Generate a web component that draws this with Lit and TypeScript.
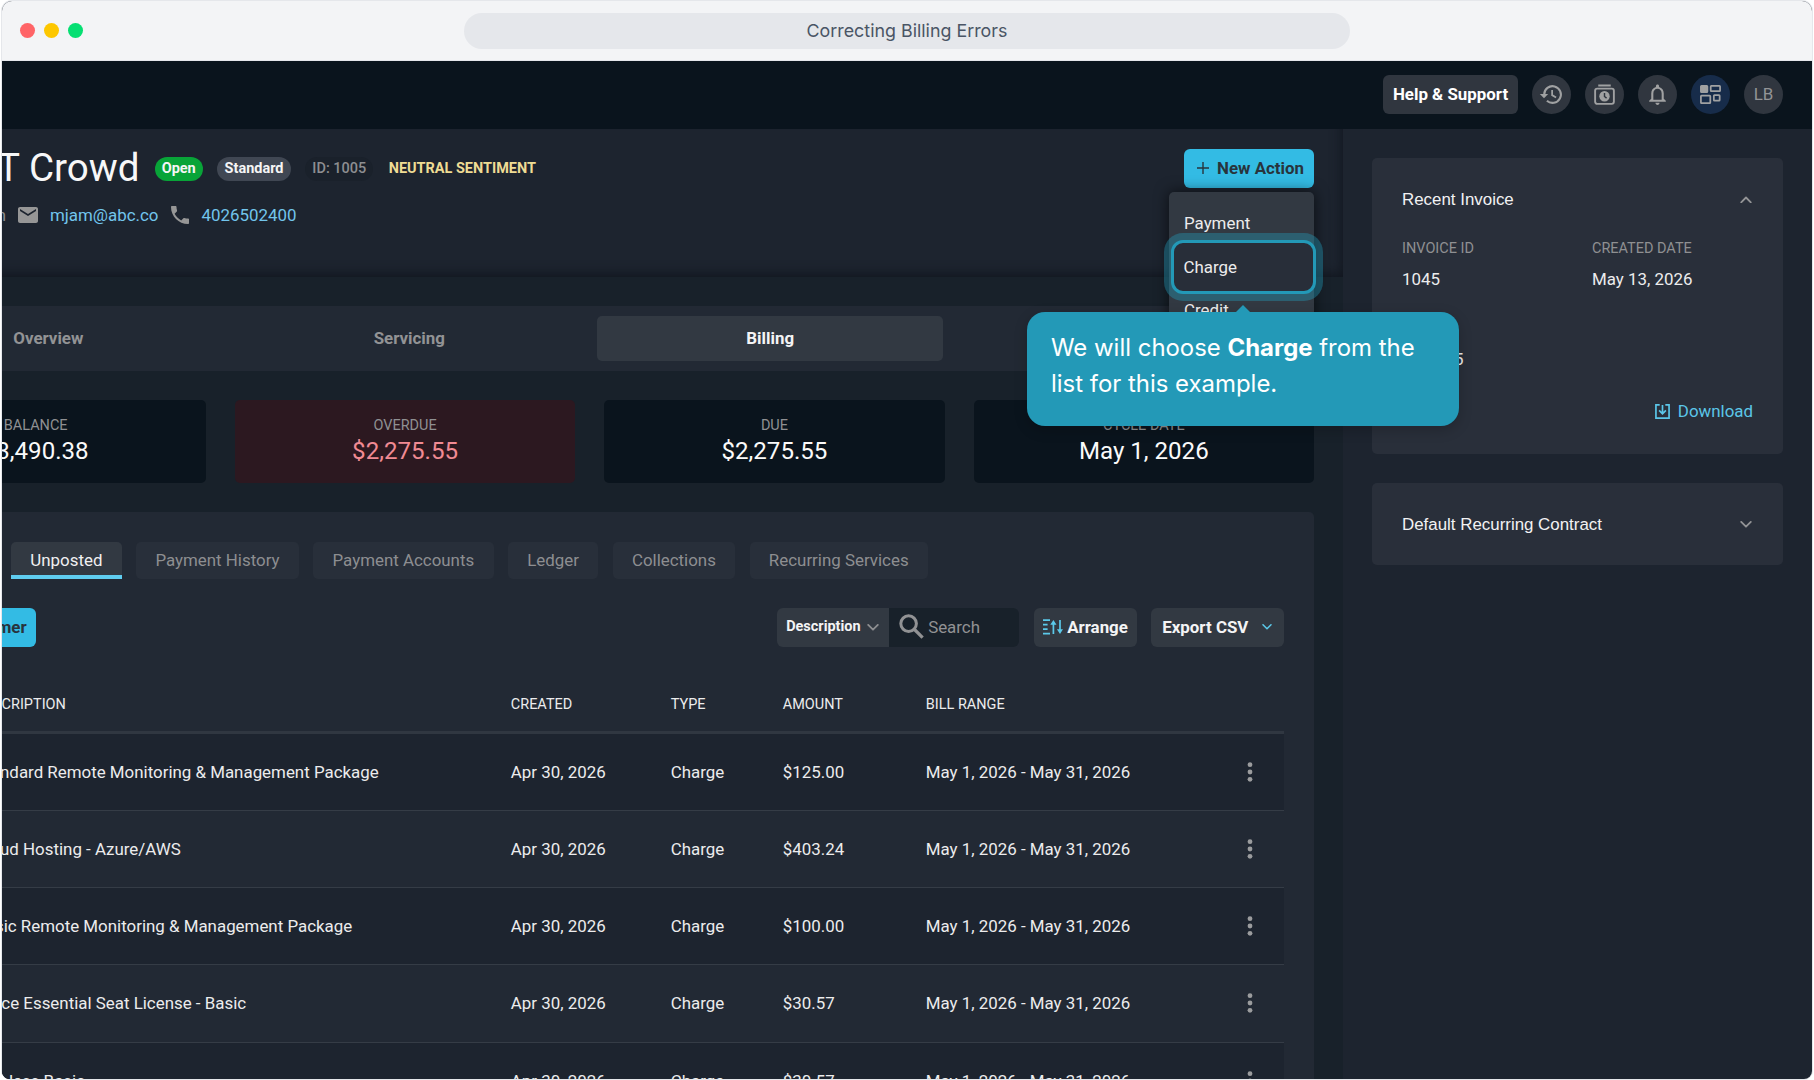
import { LitElement, html, css, svg } from "lit";
import { customElement } from "lit/decorators.js";
import { classMap } from "lit/directives/class-map.js";

const chevron = (dir: "up" | "down", w: number) => html`
  <svg class="chev" width=${w} height=${w * 0.6} viewBox="0 0 20 12" fill="none" stroke="currentColor" stroke-width="3" stroke-linecap="round" stroke-linejoin="round">
    ${dir === "up" ? svg`<path d="M2 10.5 10 2.5l8 8"/>` : svg`<path d="M2 1.5 10 9.5l8-8"/>`}
  </svg>`;

const icons = {
  history: html`<svg width="25" height="25" viewBox="0 0 24 24" fill="none" stroke="currentColor" stroke-width="2">
    <path d="M5 12a8 8 0 1 1 2.6 5.9"/><path d="M.8 11.4h8L4.8 15.7z" fill="currentColor" stroke="none"/>
    <path d="M12.6 7.6v5l3.8 2.2" stroke-width="1.7"/></svg>`,
  clockBox: html`<svg width="25" height="25" viewBox="0 0 24 24" fill="none" stroke="currentColor" stroke-width="1.8">
    <path d="M6 3.3h12" stroke-width="2"/><rect x="3" y="6.4" width="18" height="14.6" rx="2"/>
    <circle cx="12" cy="13.7" r="5" fill="currentColor" stroke="none"/><path d="M12 10.6v3.3l2 1.6" stroke="#30363f" stroke-width="1.4"/></svg>`,
  bell: html`<svg width="25" height="25" viewBox="0 0 24 24" fill="currentColor">
    <path d="M12 22c1.1 0 2-.9 2-2h-4c0 1.1.9 2 2 2zm6-6v-5c0-3.07-1.63-5.64-4.5-6.32V4c0-.83-.67-1.5-1.5-1.5s-1.5.67-1.5 1.5v.68C7.64 5.36 6 7.92 6 11v5l-2 2v1h16v-1l-2-2zm-2 1H8v-6c0-2.48 1.51-4.5 4-4.5s4 2.02 4 4.5v6z"/></svg>`,
  grid: html`<svg width="25" height="25" viewBox="0 0 24 24" fill="none" stroke="currentColor" stroke-width="1.7">
    <rect x="2.8" y="3.8" width="6.2" height="6" rx=".6" fill="currentColor"/><rect x="12.2" y="3.8" width="9" height="5" rx=".6"/>
    <rect x="2.8" y="13" width="9" height="7.2" rx=".6"/><rect x="15.2" y="12.6" width="5.6" height="5.2" rx=".6"/></svg>`,
  mail: html`<svg width="24" height="24" viewBox="0 0 24 24" fill="currentColor"><path d="M20 4H4c-1.1 0-1.99.9-1.99 2L2 18c0 1.1.9 2 2 2h16c1.1 0 2-.9 2-2V6c0-1.1-.9-2-2-2zm0 4-8 5-8-5V6l8 5 8-5v2z"/></svg>`,
  phone: html`<svg width="24" height="24" viewBox="0 0 24 24" fill="currentColor"><path d="M6.62 10.79c1.44 2.83 3.76 5.14 6.59 6.59l2.2-2.2c.27-.27.67-.36 1.02-.24 1.12.37 2.33.57 3.57.57.55 0 1 .45 1 1V20c0 .55-.45 1-1 1-9.39 0-17-7.61-17-17 0-.55.45-1 1-1h3.5c.55 0 1 .45 1 1 0 1.25.2 2.45.57 3.57.11.35.03.74-.25 1.02l-2.2 2.2z"/></svg>`,
  plus: html`<svg width="12" height="12" viewBox="0 0 12 12" stroke="currentColor" stroke-width="1.4"><path d="M6 0v12M0 6h12"/></svg>`,
  search: html`<svg width="25" height="25" viewBox="0 0 25 25" fill="none" stroke="currentColor" stroke-width="3"><circle cx="9.6" cy="9.6" r="7.8"/><path d="m15 15 8.6 8.6" stroke-width="3.2"/></svg>`,
  arrange: html`<svg width="20" height="16" viewBox="0 0 20 16" fill="none" stroke="currentColor" stroke-width="1.7">
    <path d="M0 1.2h7M0 5.6h4.6M0 10.2h4.6M0 14.6h7M10.4 15V3M17 1v12"/><path d="M7.3 5.8 10.4 1l3.1 4.8zM13.9 10.2 17 15l3-4.8z" fill="currentColor" stroke="none"/></svg>`,
  download: html`<svg width="15" height="15" viewBox="0 0 16 16" fill="none" stroke="currentColor" stroke-width="1.8"><path d="M5 1H1v14h14V1H11M8 1v9M4.4 6.8 8 10.4 11.6 6.8"/></svg>`,
  dots: html`<svg width="6" height="20" viewBox="0 0 6 20" fill="currentColor"><circle cx="3" cy="2.7" r="2.4"/><circle cx="3" cy="10" r="2.4"/><circle cx="3" cy="17.3" r="2.4"/></svg>`,
};

const PERIOD = "May 1, 2026 - May 31, 2026";
const ROWS = [
  ["Standard Remote Monitoring & Management Package", "$125.00"],
  ["Cloud Hosting - Azure/AWS", "$403.24"],
  ["Basic Remote Monitoring & Management Package", "$100.00"],
  ["Office Essential Seat License - Basic", "$30.57"],
  ["Wireless Basic", "$30.57"],
];
const STATS = [
  ["BALANCE", "$3,490.38"],
  ["OVERDUE", "$2,275.55"],
  ["DUE", "$2,275.55"],
  ["CYCLE DATE", "May 1, 2026"],
];
const SECTIONS = ["Overview", "Servicing", "Billing", "Activity"];
const LISTS = ["Unposted", "Payment History", "Payment Accounts", "Ledger", "Collections", "Recurring Services"];

@customElement("app-root")
export class AppRoot extends LitElement {
  static styles = css`
    :host { display: block; position: relative; width: 1814px; height: 1080px; overflow: hidden; background: #fff;
      font: 16.9px/20px Roboto, "Liberation Sans", sans-serif; color: #ececed; white-space: nowrap; }
    * { box-sizing: border-box; }
    svg { display: block; flex: none; }
    .window { margin: 1px 2px; height: 1078px; border-radius: 10px 10px 8px 8px; overflow: hidden; display: flex; flex-direction: column;
      background: #1d242f; box-shadow: 0 0 0 1px #e5e7eb; }
    .chrome { height: 60px; flex: none; background: #f3f4f6; border-bottom: 1px solid #e5e7eb; display: grid;
      grid-template-columns: 1fr 886px 1fr; align-items: center; padding: 0 18px; }
    .lights { display: flex; gap: 9px; }
    .light { width: 15px; height: 15px; border-radius: 50%; }
    .red { background: #ff6467; } .amber { background: #fdc700; } .green { background: #05df72; }
    .address { height: 36px; margin-top: 1px; padding-bottom: 1.5px; border-radius: 18px; background: #e5e7eb; color: #4a5565; display: flex; align-items: center;
      justify-content: center; font: 17.85px Inter, sans-serif; }
    .topbar { height: 67.5px; flex: none; background: #0a141d; display: flex; align-items: center; justify-content: flex-end; gap: 14px; padding-right: 29px; }
    .help { height: 39px; width: 135px; padding-bottom: 1px; border-radius: 6px; background: #30363f; color: #fff; font-weight: 700; display: flex; align-items: center; justify-content: center; }
    .round { width: 39px; height: 39px; border-radius: 50%; background: #30363f; color: #a0a1a2; display: flex; align-items: center; justify-content: center; }
    .user { color: #939496; padding-bottom: 1px; }
    .blue { background: #172c4a; }
    .body { flex: 1; min-height: 0; display: flex; }
    .main { width: 1341px; flex: none; overflow: hidden; background: #18212a; }
    .side { flex: 1; padding: 29px; display: flex; flex-direction: column; gap: 29px; }

    .head { height: 148px; background: #1d242f; box-shadow: inset -6px -8px 12px -5px #11161f; display: flex; justify-content: space-between; padding: 20px 29px 0 0; }
    .title-row { display: flex; align-items: center; gap: 14.5px; height: 39px; }
    .title { width: 137.5px; display: flex; justify-content: flex-end; font-size: 38.6px; line-height: 40px; color: #f7f7f8; }
    .tag { height: 24.5px; margin-top: 1.5px; border-radius: 12.3px; padding: 0 7.2px; font-size: 14.47px; font-weight: 700; display: flex; align-items: center; color: #f5f5f5; }
    .open { background: #08a438; margin-left: .5px; } .standard { background: #404753; } .ident { background: #1a212b; color: #8d8e91; font-weight: 500; }
    .mood { margin: 2px 0 0 .8px; font-size: 14.47px; font-weight: 700; color: #efdc94; }
    .contact { display: flex; align-items: center; height: 26px; margin-top: 14.5px; color: #72c5ec; }
    .contact svg { color: #969696; }
    .person { width: 4px; display: flex; justify-content: flex-end; color: #8d8e91; margin-right: 10px; }
    .mail { margin: 0 9.5px 0 10px; } .phone { margin-left: 9.5px; }
    .new { width: 130.5px; height: 39px; padding: 0 0 0 3px; border-radius: 6px; background: #33bbe4; color: #28343c; font-weight: 700; display: flex; align-items: center; justify-content: center; gap: 8.5px; }

    .content { margin-left: -136.5px; padding: 29.5px 29px 0 0; display: flex; flex-direction: column; gap: 29px; }
    .sections { height: 65px; background: #222934; padding: 9.6px; display: grid; grid-template-columns: repeat(4, 1fr); gap: 14.4px; border-radius: 5px; }
    .section { display: flex; align-items: center; justify-content: center; padding-bottom: 2px; font-weight: 700; color: #929395; border-radius: 5px; }
    .section.on { background: #323942; color: #f4f4f5; }
    .stats { display: grid; grid-template-columns: repeat(4, 1fr); gap: 29px; }
    .stat { height: 82.5px; background: #0a141d; border-radius: 5px; display: flex; flex-direction: column; align-items: center; padding-top: 16px; }
    .stat.late { background: #2c1820; } .stat.late .sum { color: #f18a93; }
    .label { font-size: 14.47px; line-height: 20px; color: #8f9092; }
    .sum { font-size: 24.1px; line-height: 30px; color: #fafafa; }
    .panel { background: #222934; border-radius: 5px; padding: 30px 29.8px 0; height: 700px; }
    .lists { display: flex; gap: 14.4px; padding-left: 115.7px; }
    .list { height: 37.4px; padding: 0 19.3px; border-radius: 5px; background: #282f3a; color: #8d8e91; display: flex; align-items: center; }
    .list.on { background: #323942; color: #f0f0f1; border-bottom: 4px solid #5fcdf0; border-radius: 5px 5px 0 0; padding-top: 4px; }
    .tools { display: flex; margin-top: 28.9px; height: 39px; }
    .bill { width: 141px; margin-right: auto; border-radius: 6px; background: #33bbe4; color: #28343c; font-weight: 700; display: flex; align-items: center; justify-content: flex-end; padding: 0 9.7px 1px 0; }
    .field { width: 112px; background: #323942; border-radius: 6px 0 0 6px; font-size: 14.47px; font-weight: 700; color: #f4f4f5; display: flex; align-items: center; justify-content: center; gap: 6px; padding-right: 1.5px; }
    .field .chev { color: #8d8e91; }
    .find { width: 130px; background: #18212a; border-radius: 0 6px 6px 0; display: flex; align-items: center; gap: 4px; padding: 0 0 1px 10px; color: #919294; }
    .btn { margin-left: 14.4px; padding-bottom: 1px; background: #323942; border-radius: 6px; font-weight: 700; color: #f4f4f5; display: flex; align-items: center; justify-content: center; gap: 4.5px; width: 103.5px; }
    .btn.csv { width: 132.8px; gap: 14px; padding-right: 1px; }
    .btn svg { color: #5bc9ea; }
    .row { display: grid; grid-template-columns: 615.5px 160px 112px 143px 304px 1fr; align-items: center; height: 77.2px; border-bottom: 1.2px solid #353c46; }
    .row:nth-child(even) { background: #1d242f; }
    .name { padding-left: 80px; }
    .row.top { height: 87px; border-bottom: 3px solid #303741; font-size: 14.47px; padding-top: 31.6px; }
    .row svg { color: #9b9c9e; margin-left: 17px; }

    .card { background: #292f3a; border-radius: 5px; padding: 0 30px; }
    .card-title { height: 82.5px; padding-top: 2px; display: flex; align-items: center; justify-content: space-between; font-family: "Liberation Sans", Arial, sans-serif; color: #f2f2f3; }
    .card-title .chev { color: #929395; margin: -1px 1px 0 0; }
    .recent { height: 296px; }
    .facts { display: grid; grid-template-columns: 1fr 1fr; column-gap: 29px; margin-top: -1px; }
    .fact { display: flex; flex-direction: column; gap: 10px; height: 80px; }
    .total { margin-top: 30px; height: 20px; }
    .download { display: flex; justify-content: flex-end; align-items: center; gap: 8px; color: #5bc6e8; margin-top: 32px; height: 20px; }

    .menu { position: absolute; left: 1169px; top: 192px; width: 145px; height: 180px; border-radius: 5px; background: #323942; box-shadow: 0 0 14px 1px rgba(0,0,0,.55); padding: 9px 15px; }
    .item { height: 43.5px; display: flex; align-items: center; }
    .focus { position: absolute; left: 1170.5px; top: 240px; width: 145px; height: 54px; border-radius: 12px; border: 3px solid #2399b7; box-shadow: 0 0 0 7px rgba(35,153,183,.4); background: #282e39; padding: 0 0 1px 10px; display: flex; align-items: center; }
    .tip { position: absolute; left: 1027px; top: 312px; width: 432px; height: 114px; border-radius: 18px; background: #2399b7; color: #fff; padding: 18px 24px; font: 23.93px/36px Inter, sans-serif; box-shadow: 0 4px 14px rgba(0,0,0,.2); }
    .tip::before { content: ""; position: absolute; left: 209px; top: -7px; border: 7px solid transparent; border-top: 0; border-bottom-color: #2399b7; }
    .tip b { font-weight: 700; }
  `;

  render() {
    return html`
      <div class="window">
        <div class="chrome">
          <div class="lights"><i class="light red"></i><i class="light amber"></i><i class="light green"></i></div>
          <div class="address">Correcting Billing Errors</div>
        </div>
        <div class="topbar">
          <div class="help">Help &amp; Support</div>
          <div class="round">${icons.history}</div>
          <div class="round">${icons.clockBox}</div>
          <div class="round">${icons.bell}</div>
          <div class="round blue">${icons.grid}</div>
          <div class="round user">LB</div>
        </div>
        <div class="body">
          <div class="main">
            <div class="head">
              <div>
                <div class="title-row">
                  <div class="title"><span>The IT Crowd</span></div>
                  <span class="tag open">Open</span>
                  <span class="tag standard">Standard</span>
                  <span class="tag ident">ID: 1005</span>
                  <span class="mood">NEUTRAL SENTIMENT</span>
                </div>
                <div class="contact">
                  <span class="person"><span>Jen</span></span>
                  ${icons.mail}<span class="mail">mjam@abc.co</span>
                  ${icons.phone}<span class="phone">4026502400</span>
                </div>
              </div>
              <div class="new">${icons.plus}<span>New Action</span></div>
            </div>
            <div class="content">
              <div class="sections">
                ${SECTIONS.map((s) => html`<div class=${classMap({ section: true, on: s === "Billing" })}>${s}</div>`)}
              </div>
              <div class="stats">
                ${STATS.map(([l, v]) => html`<div class=${classMap({ stat: true, late: l === "OVERDUE" })}><span class="label">${l}</span><span class="sum">${v}</span></div>`)}
              </div>
              <div class="panel">
                <div class="lists">
                  ${LISTS.map((s, i) => html`<div class=${classMap({ list: true, on: i === 0 })}>${s}</div>`)}
                </div>
                <div class="tools">
                  <div class="bill">Bill Customer</div>
                  <div class="field">Description${chevron("down", 12)}</div>
                  <div class="find">${icons.search}<span>Search</span></div>
                  <div class="btn">${icons.arrange}<span>Arrange</span></div>
                  <div class="btn csv"><span>Export CSV</span>${chevron("down", 10)}</div>
                </div>
                <div class="table">
                  <div class="row top">
                    <span class="name">DESCRIPTION</span><span>CREATED</span><span>TYPE</span><span>AMOUNT</span><span>BILL RANGE</span>
                  </div>
                  ${ROWS.map(([name, amount]) => html`
                    <div class="row"><span class="name">${name}</span><span>Apr 30, 2026</span><span>Charge</span><span>${amount}</span><span>${PERIOD}</span>${icons.dots}</div>`)}
                </div>
              </div>
            </div>
          </div>
          <div class="side">
            <div class="card recent">
              <div class="card-title"><span>Recent Invoice</span>${chevron("up", 12)}</div>
              <div class="facts">
                <div class="fact"><span class="label">INVOICE ID</span><span>1045</span></div>
                <div class="fact"><span class="label">CREATED DATE</span><span>May 13, 2026</span></div>
              </div>
              <div class="total">$275.55</div>
              <div class="download">${icons.download}<span>Download</span></div>
            </div>
            <div class="card">
              <div class="card-title"><span>Default Recurring Contract</span>${chevron("down", 12)}</div>
            </div>
          </div>
        </div>
      </div>
      <div class="menu"><div class="item">Payment</div><div class="item"></div><div class="item">Credit</div></div>
      <div class="focus">Charge</div>
      <div class="tip">We will choose <b>Charge</b> from the<br />list for this example.</div>
    `;
  }
}
